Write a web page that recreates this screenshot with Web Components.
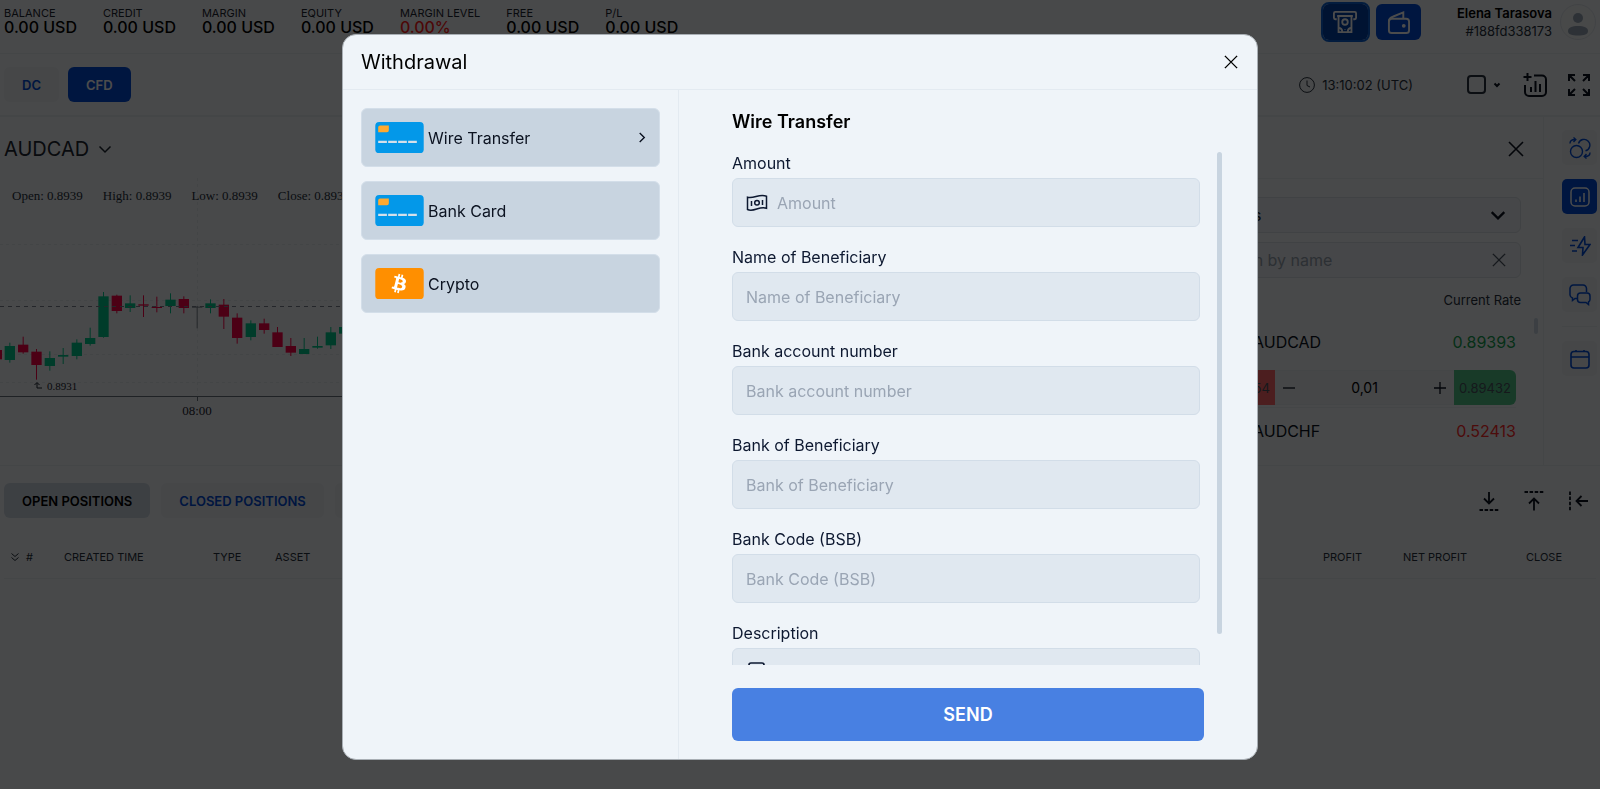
<!DOCTYPE html>
<html lang="en">
<head>
<meta charset="utf-8">
<title>Withdrawal</title>
<style>
    html, body {
        height: 100%;
    }

    body {
        margin: 0;
        overflow: hidden;
        background: #f2f5f8;
        color: #0b1220;
        font-family: Inter, "Liberation Sans", sans-serif;
        font-size: 16px;
        --blue: #004cd8;
        --line: #e4e9ee;
        --soft: #e9edf1;
    }
</style>
</head>
<body>
<trading-page></trading-page>
<withdraw-dialog></withdraw-dialog>

<script>
// stroke icons: view box, shape, stroke width
const icons = {
    atm: ["0 0 28 26", `<path d="M5 10H3.5A1.5 1.5 0 0 1 2 8.500V3.500A1.500 1.500 0 0 1 3.500 2h21A1.500 1.500 0 0 1 26 3.500v5a1.500 1.500 0 0 1-1.500 1.500H23M5.500 6.500h17M7 6.500V24h14V6.500"/><circle cx="14" cy="13" r="3"/><path d="M14 13v.1M7 19.500c2.500 0 4 1.800 4 4.500M21 19.500c-2.500 0-4 1.800-4 4.500M14 20.500v.5"/>`, 2],
    wallet: ["0 0 24 26", `<rect x="2" y="9" width="21" height="15" rx="3"/><path d="M2 12C2 9 3 8 6 7l11-4.500V9"/><circle cx="17.500" cy="16.500" r="1" fill="currentColor"/>`, 2],
    clock: ["0 0 16 16", `<circle cx="8" cy="8" r="7.400"/><path d="M8 3.500V8.500l3 1.500"/>`, 1],
    caret: ["0 0 8 8", `<path d="M1.500 2.500L4 5l2.500-2.500"/>`, 2],
    addChart: ["0 0 24 24", `<path d="M4.500 0v8M.5 4h8M11 2.500h8a4 4 0 0 1 4 4V19a4 4 0 0 1-4 4H6a4 4 0 0 1-4-4v-7M8 14v5M12.500 8v11M17 11v8"/>`, 2],
    expand: ["0 0 24 24", `<path d="M2 8V2h6M2 2l6 6M16 2h6v6M22 2l-6 6M22 16v6h-6M22 22l-6-6M8 22H2v-6M2 22l6-6"/>`, 2],
    chevron: ["0 0 14 14", `<path d="M1.500 4.500L7 10l5.500-5.500"/>`, 2],
    thinChevron: ["0 0 14 14", `<path d="M1.500 4.500L7 10l5.500-5.500"/>`, 1.5],
    right: ["0 0 8 12", `<path d="M1.500 1L6.500 6l-5 5"/>`, 1.5],
    close: ["0 0 16 16", `<path d="M1 1l14 14M15 1L1 15"/>`, 1.6],
    swap: ["0 0 22 22", `<circle cx="7.500" cy="14.500" r="6"/><path d="M9.500 6.500a5.800 5.800 0 1 1 7 7.300"/><path d="M1 6.500C1 3.500 3 2.500 6 2.500M4.500.500L6.800 2.500 4.500 5"/><path d="M21 15.500c0 3-2 4-5 4M17.500 17L15.200 19.500l2.300 2"/>`, 1.4],
    chartBox: ["0 0 20 20", `<rect x="1" y="1" width="18" height="18" rx="4"/><path d="M6 12.500V15M10 9.500V15M14 6v9"/>`, 1.5],
    bolt: ["0 0 22 20", `<path d="M15.500 1L9 11.500h5L13.500 19 21 8.500h-5zM3 4.500h6M1 9.500h5M3 15h5"/>`, 1.6],
    chat: ["0 0 22 22", `<path d="M8 14.500H6l-2.500 2V14A3.500 3.500 0 0 1 1 11V4.500A3.500 3.500 0 0 1 4.500 1H14a3.500 3.500 0 0 1 3.500 3.500V8"/><path d="M11.500 9h6.500a3 3 0 0 1 3 3v3.500a3 3 0 0 1-1.500 2.500v2.500L17 18.500h-5.500a3 3 0 0 1-3-3V12a3 3 0 0 1 3-3z"/>`, 1.5],
    calendar: ["0 0 20 20", `<rect x="1" y="2.500" width="18" height="16.500" rx="3"/><path d="M1 8h18M6 1v2M14 1v2"/>`, 1.6],
    dockDown: ["0 0 20 20", `<path d="M10 1v11M5 7.500l5 5 5-5"/><path d="M.5 19h19" stroke-dasharray="3.5 1.600"/>`, 1.8],
    dockUp: ["0 0 20 20", `<path d="M10 19.500V8M5 12.500l5-5 5 5"/><path d="M.5 1h19" stroke-dasharray="3.5 1.600"/>`, 1.8],
    dockLeft: ["0 0 20 20", `<path d="M19 10H8M12.500 5l-5 5 5 5"/><path d="M1 .5v19" stroke-dasharray="3.5 1.600"/>`, 1.8],
    sort: ["0 0 10 10", `<path d="M1.500 1.500L5 4.500l3.500-3M1.500 5.500L5 8.500l3.500-3"/>`, 1],
    minus: ["0 0 12 12", `<path d="M0 6h12"/>`, 1.3],
    plus: ["0 0 12 12", `<path d="M0 6h12M6 0v12"/>`, 1.3],
    banknote: ["0 0 22 18", `<path d="M1.500 3.200C8 5 13 -.5 20.500 2.200V14.200C13 11.700 8 18.500 1.500 15.500z"/><circle cx="11" cy="8.800" r="2.300"/><path d="M5.500 7v5M16.500 6v5"/>`, 1.5],
    note: ["0 0 22 22", `<rect x="3" y="1" width="15" height="20" rx="2"/><path d="M7 7h7M7 11h7"/>`, 1.7]
};

function icon(name, width, height = width) {
    const [box, shape, stroke] = icons[name];
    return `<svg width="${width}" height="${height}" viewBox="${box}" fill="none" stroke="currentColor" stroke-width="${stroke}" aria-hidden="true">${shape}</svg>`;
}

const resetStyle = `
    *, *::before, *::after { box-sizing: border-box; }
    button, input, select { font: inherit; color: inherit; margin: 0; }
    button { border: 0; padding: 0; background: none; cursor: pointer; display: flex; align-items: center; justify-content: center; }
    svg { display: block; flex: none; }
`;

class BaseElement extends HTMLElement {
    constructor() {
        super();
        this.attachShadow({ mode: "open" });
    }

    connectedCallback() {
        this.render();
    }

    render() {
        const template = document.createElement("template");
        template.innerHTML = `<style>${resetStyle}${this.getStyle()}</style>${this.getTemplate()}`;
        this.shadowRoot.replaceChildren(template.content.cloneNode(true));
    }
}

class StatItem extends BaseElement {
    getTemplate() {
        return `<span class="label">${this.getAttribute("label")}</span><strong><slot></slot></strong>`;
    }

    getStyle() {
        return `
            :host { display: flex; flex-direction: column; color: #000; }
            .label { font-size: 11px; line-height: 14px; color: #1c2530; }
            strong { font-size: 16px; line-height: 15px; font-weight: 500; }
            :host([negative]) strong { color: #ff1a1a; }
        `;
    }
}
customElements.define("stat-item", StatItem);

class TabButton extends BaseElement {
    getTemplate() {
        return `<button type="button"><slot></slot></button>`;
    }

    getStyle() {
        return `
            :host { display: block; }
            button {
                height: 35px;
                padding: 0 18px;
                border-radius: 6px;
                background: var(--soft);
                color: var(--blue);
                font-size: 13px;
                font-weight: 600;
                white-space: nowrap;
            }
            :host([primary]) button { background: var(--blue); color: #fff; }
            :host([selected]) button { background: #ccd6e2; color: #000; }
        `;
    }
}
customElements.define("tab-button", TabButton);

class AppHeader extends BaseElement {
    getTemplate() {
        return `
            <div class="stats">
                <stat-item label="BALANCE">0.00 USD</stat-item>
                <stat-item label="CREDIT">0.00 USD</stat-item>
                <stat-item label="MARGIN">0.00 USD</stat-item>
                <stat-item label="EQUITY">0.00 USD</stat-item>
                <stat-item label="MARGIN LEVEL" negative>0.00%</stat-item>
                <stat-item label="FREE">0.00 USD</stat-item>
                <stat-item label="P/L">0.00 USD</stat-item>
            </div>
            <div class="account">
                <button type="button" class="active" aria-label="Withdraw">${icon("atm", 26, 24)}</button>
                <button type="button" aria-label="Deposit">${icon("wallet", 23, 25)}</button>
                <div class="user">
                    <strong>Elena Tarasova</strong>
                    <span>#188fd338173</span>
                </div>
                <svg class="avatar" width="36" height="36" viewBox="0 0 36 36">
                    <circle cx="18" cy="18" r="17.500" fill="#f0f3f6" stroke="#dbe1e7"/>
                    <circle cx="18" cy="14" r="5" fill="#98a5b4"/>
                    <path d="M8 27c0-3.500 4-5 10-5s10 1.500 10 5-4 4.500-10 4.500S8 30.500 8 27z" fill="#98a5b4"/>
                </svg>
            </div>
        `;
    }

    getStyle() {
        return `
            :host { display: flex; justify-content: space-between; height: 54px; padding: 4px 4px 0; border-bottom: 1px solid var(--line); box-sizing: border-box; }
            .stats { display: flex; gap: 26px; padding-top: 2px; }
            .account { display: flex; align-items: flex-start; gap: 8px; }
            .account button { width: 45px; height: 36px; border-radius: 6px; background: var(--blue); color: #fff; }
            .account .active { background: #0040a8; outline: 2px solid #0a60d0; }
            .user { display: flex; flex-direction: column; align-items: flex-end; margin-left: 28px; line-height: 18px; font-size: 13px; }
            .user strong { font-weight: 600; color: #000; }
            .user span { color: #26303c; }
        `;
    }
}
customElements.define("app-header", AppHeader);

class ToolBar extends BaseElement {
    getTemplate() {
        return `
            <div class="group">
                <tab-button>DC</tab-button>
                <tab-button primary>CFD</tab-button>
            </div>
            <div class="tools">
                <span class="time">${icon("clock", 16)}13:10:02 (UTC)</span>
                <button type="button" class="layout" aria-label="Layout"><i></i>${icon("caret", 8)}</button>
                <button type="button" class="indicator" aria-label="Add indicator">${icon("addChart", 24)}</button>
                <button type="button" aria-label="Full screen">${icon("expand", 24)}</button>
            </div>
        `;
    }

    getStyle() {
        return `
            :host { display: flex; justify-content: space-between; align-items: center; height: 63px; padding: 0 9px 0 4px; border-bottom: 2px solid var(--line); box-sizing: border-box; }
            .group { display: flex; gap: 9px; }
            .tools { display: flex; align-items: center; gap: 20px; }
            .time { display: flex; align-items: center; gap: 7px; font-size: 13px; color: #26303c; margin-right: 34px; }
            .layout { gap: 7px; }
            .layout i { width: 19px; height: 19px; border: 2px solid #26303c; border-radius: 4px; }
            .indicator { margin-left: 2px; }
        `;
    }
}
customElements.define("tool-bar", ToolBar);

// x, high, body top, body bottom, low, direction: three units to a pixel
const candles = [
    [-10, 350, 360, 388, 392, "down"], [29, 338, 348, 390, 398, "up"], [69, 320, 344, 367, 371, "down"],
    [109, 357, 365, 405, 449, "down"], [149, 364, 384, 408, 422, "up"], [189, 354, 375, 380, 402, "up"],
    [230, 328, 338, 378, 388, "up"], [270, 293, 324, 342, 347, "up"], [310, 186, 199, 321, 323, "up"],
    [350, 194, 197, 243, 250, "down"], [390, 196, 220, 234, 246, "up"], [430, 196, 223, 227, 261, "down"],
    [470, 200, 231, 234, 247, "down"], [511, 190, 209, 228, 250, "up"], [551, 199, 207, 234, 250, "down"],
    [591, 228, 230, 233, 295, "flat"], [631, 208, 220, 234, 250, "up"], [671, 207, 224, 260, 297, "down"],
    [711, 250, 263, 324, 341, "down"], [752, 271, 280, 321, 331, "up"], [792, 266, 280, 300, 311, "down"],
    [832, 291, 307, 351, 351, "down"], [872, 324, 348, 368, 378, "down"], [912, 324, 357, 372, 372, "up"],
    [952, 320, 348, 353, 356, "up"], [992, 291, 307, 346, 357, "up"], [1032, 280, 291, 311, 330, "up"]
];

class ChartPanel extends BaseElement {
    getTemplate() {
        const bars = candles.map(([x, high, top, bottom, low, dir]) => `
            <g class="${dir}">
                <rect x="${x - 1}" y="${high}" width="3" height="${low - high}"/>
                <rect x="${x - 15}" y="${top}" width="31" height="${bottom - top}"/>
            </g>`).join("");

        return `
            <button type="button" class="pair">AUDCAD ${icon("thinChevron", 14)}</button>
            <div class="plot">
                <svg width="100%" height="287">
                    <g stroke="#e2e7ec" stroke-dasharray="3 3">
                        <path d="M197.500 0V217M0 66.500H1200M0 122.500H1200M0 176.500H1200M0 204.500H1200"/>
                    </g>
                    <g transform="translate(0 52) scale(.33333)">${bars}</g>
                    <path d="M0 128.500H1200" stroke="#78818c" stroke-dasharray="4 4"/>
                    <path d="M0 218.500H1200M197.500 218V223" stroke="#6a727c"/>
                    <path d="M42 210h-5v-5M34.500 207l2.500-2.500 2.500 2.500" fill="none" stroke="#1c2530"/>
                    <text x="47" y="212" class="serif">0.8931</text>
                    <text x="197" y="237" class="axis">08:00</text>
                </svg>
                <div class="legend"><span>Open: 0.8939</span><span>High: 0.8939</span><span>Low: 0.8939</span><span>Close: 0.8939</span></div>
            </div>
        `;
    }

    getStyle() {
        return `
            :host { display: block; min-width: 0; }
            .pair { height: 61px; padding: 3px 4px 0; gap: 9px; font-size: 20px; color: #1c2530; }
            .plot { position: relative; }
            .up { fill: #00c88c; }
            .down { fill: #ff0048; }
            .flat { fill: #78818c; }
            .serif { font: 11px "Liberation Serif", serif; fill: #1c2530; }
            .axis { font: 13px "Liberation Serif", serif; fill: #1c2530; text-anchor: middle; }
            .legend { position: absolute; top: 8px; left: 12px; display: flex; gap: 20px; font: 13px/20px "Liberation Serif", serif; color: #26303c; white-space: nowrap; }
        `;
    }
}
customElements.define("chart-panel", ChartPanel);

class RateRow extends BaseElement {
    getTemplate() {
        return `<span>${this.getAttribute("pair")}</span><span class="rate">${this.getAttribute("rate")}</span>`;
    }

    getStyle() {
        return `
            :host { display: flex; align-items: center; justify-content: space-between; height: 47px; padding-left: 40px; color: #0b1220; }
            :host([up]) .rate { color: #14a050; }
            :host([down]) .rate { color: #ff2a2a; }
        `;
    }
}
customElements.define("rate-row", RateRow);

class MarketPanel extends BaseElement {
    getTemplate() {
        return `
            <header><button type="button" aria-label="Close">${icon("close", 16)}</button></header>
            <div class="filters">
                <label class="box">
                    <select aria-label="Group"><option>Majors</option></select>
                    ${icon("chevron", 16)}
                </label>
                <label class="box">
                    <input type="text" placeholder="Search by name" aria-label="Search by name">
                    ${icon("close", 14)}
                </label>
                <p>Current Rate</p>
            </div>
            <div class="list">
                <div class="rows">
                    <rate-row pair="AUDCAD" rate="0.89393" up></rate-row>
                    <div class="trade">
                        <button type="button" class="sell">0.89354</button>
                        <div class="lot">
                            <button type="button" aria-label="Less">${icon("minus", 12)}</button>
                            <input type="text" value="0,01" aria-label="Volume">
                            <button type="button" aria-label="More">${icon("plus", 12)}</button>
                        </div>
                        <button type="button" class="buy">0.89432</button>
                    </div>
                    <rate-row pair="AUDCHF" rate="0.52413" down></rate-row>
                </div>
                <div class="thumb"></div>
            </div>
        `;
    }

    getStyle() {
        return `
            :host { display: block; overflow: hidden; }
            header { display: flex; justify-content: flex-end; height: 62px; padding: 2px 19px 0; border-bottom: 1px solid var(--line); }
            .filters { display: flex; flex-direction: column; gap: 9px; padding: 18px 22px 0 23px; }
            .box { display: flex; align-items: center; height: 36px; padding: 0 14px 0 9px; border: 1px solid #d6dce3; border-radius: 6px; background: #eceff3; }
            select, input { flex: 1; min-width: 0; border: 0; padding: 0; outline: 0; background: none; appearance: none; }
            .box + .box { color: #4a5562; }
            ::placeholder { color: #94a0ad; opacity: 1; }
            p { margin: 3px 0 0; text-align: right; font-size: 13px; line-height: 20px; color: #26303c; }
            .list { display: flex; align-items: flex-start; gap: 18px; padding: 8px 5px 0 36px; }
            .rows { flex: 1; min-width: 0; }
            .trade { display: flex; height: 35px; margin: 5px 0 2px; font-size: 14px; }
            .sell, .buy { width: 62px; font-size: 13px; color: #4a545f; }
            .sell { background: #ff6468; border-radius: 6px 0 0 6px; }
            .buy { background: #50c488; border-radius: 0 6px 6px 0; }
            .lot { flex: 1; display: flex; padding: 0 8px; min-width: 0; border: solid var(--line); border-width: 1px 0; background: #e9edf1; }
            .lot input { text-align: center; color: #000; }
            .rows rate-row:last-child { border-top: 1px solid var(--line); }
            .thumb { width: 4px; height: 16px; border-radius: 2px; background: #c8d4e0; }
        `;
    }
}
customElements.define("market-panel", MarketPanel);

class ToolRail extends BaseElement {
    getTemplate() {
        return `
            <button type="button" aria-label="Assets">${icon("swap", 22)}</button>
            <button type="button" class="active" aria-label="Market">${icon("chartBox", 20)}</button>
            <button type="button" aria-label="Quick trade">${icon("bolt", 22, 20)}</button>
            <button type="button" aria-label="Chat">${icon("chat", 22)}</button>
            <hr>
            <button type="button" aria-label="Calendar">${icon("calendar", 20)}</button>
        `;
    }

    getStyle() {
        return `
            :host { display: flex; flex-direction: column; gap: 14px; padding: 13px 3px 0 18px; border-left: 1px solid var(--line); }
            button { width: 35px; height: 35px; border-radius: 5px; background: var(--soft); color: var(--blue); }
            .active { background: var(--blue); color: #fff; }
            hr { width: 100%; height: 1px; margin: 0; border: 0; background: var(--line); }
        `;
    }
}
customElements.define("tool-rail", ToolRail);

class PositionsPanel extends BaseElement {
    getTemplate() {
        return `
            <div class="bar">
                <div class="tabs">
                    <tab-button selected>OPEN POSITIONS</tab-button>
                    <tab-button>CLOSED POSITIONS</tab-button>
                    <tab-button>ORDERS</tab-button>
                </div>
                <div class="docks">
                    <button type="button" aria-label="Dock bottom">${icon("dockDown", 20)}</button>
                    <button type="button" aria-label="Dock top">${icon("dockUp", 20)}</button>
                    <button type="button" aria-label="Dock left">${icon("dockLeft", 20)}</button>
                </div>
            </div>
            <table>
                <colgroup><col width="60"><col width="149"><col width="62"><col><col width="80"><col width="123"><col width="70"></colgroup>
                <thead>
                    <tr>
                        <th><span class="sort">${icon("sort", 10)}#</span></th>
                        <th>CREATED TIME</th>
                        <th>TYPE</th>
                        <th>ASSET</th>
                        <th>PROFIT</th>
                        <th>NET PROFIT</th>
                        <th>CLOSE</th>
                    </tr>
                </thead>
            </table>
        `;
    }

    getStyle() {
        return `
            :host { display: block; padding: 17px 4px 0; border-top: 1px solid var(--line); }
            .bar, .tabs, .docks { display: flex; align-items: center; }
            .bar { justify-content: space-between; margin-bottom: 19px; }
            .tabs { gap: 11px; }
            .docks { gap: 25px; padding-right: 7px; }
            table { width: 100%; table-layout: fixed; border-collapse: collapse; }
            th { height: 41px; padding: 0; border-bottom: 1px solid var(--line); text-align: left; font-size: 11px; font-weight: 400; color: #26303c; }
            .sort { display: flex; align-items: center; gap: 6px; padding-left: 6px; }
        `;
    }
}
customElements.define("positions-panel", PositionsPanel);

class TradingPage extends BaseElement {
    getTemplate() {
        return `
            <app-header></app-header>
            <tool-bar></tool-bar>
            <main>
                <chart-panel></chart-panel>
                <market-panel></market-panel>
                <tool-rail></tool-rail>
            </main>
            <positions-panel></positions-panel>
        `;
    }

    getStyle() {
        return `
            :host { display: block; }
            main { display: grid; grid-template-columns: minmax(0, 1fr) 366px auto; }
        `;
    }
}
customElements.define("trading-page", TradingPage);

class MethodCard extends BaseElement {
    getTemplate() {
        const art = this.hasAttribute("crypto")
            ? `<svg width="49" height="31" viewBox="0 0 50 32"><rect width="50" height="32" rx="4" fill="#ff8f00"/><path transform="translate(8.500 0)" fill="#fff" d="M23.189 14.020c.314-2.096-1.283-3.223-3.465-3.975l.708-2.840-1.728-.430-.690 2.765c-.454-.114-.920-.220-1.385-.326l.695-2.783L15.596 6l-.708 2.839c-.376-.086-.746-.170-1.104-.260l.002-.009-2.384-.595-.460 1.846s1.283.294 1.256.312c.700.175.826.638.805 1.006l-.806 3.235c.048.012.110.030.180.057l-.183-.045-1.130 4.532c-.086.212-.303.531-.793.410.018.025-1.256-.313-1.256-.313l-.858 1.978 2.250.561c.418.105.828.215 1.231.318l-.715 2.872 1.727.430.708-2.840c.472.127.930.245 1.378.357l-.706 2.828 1.728.430.715-2.866c2.948.558 5.164.333 6.097-2.333.752-2.146-.037-3.385-1.588-4.192 1.130-.260 1.980-1.003 2.207-2.538zm-3.950 5.538c-.533 2.147-4.148.986-5.320.695l.950-3.805c1.172.293 4.929.872 4.370 3.110zm.535-5.569c-.487 1.953-3.495.960-4.470.717l.860-3.450c.975.243 4.118.696 3.610 2.733z"/></svg>`
            : `<svg width="49" height="31" viewBox="0 0 50 32"><rect width="50" height="32" rx="4" fill="#0398e9"/><path d="M5 3.500h9v5a2 2 0 0 1-2 2H3v-5a2 2 0 0 1 2-2z" fill="#ffa92f"/><path d="M3 20.500h40" stroke="#d5e0ea" stroke-width="2.500" stroke-dasharray="9 1.300"/></svg>`;

        return `
            <button type="button">
                ${art}
                <span><slot></slot></span>
                ${this.hasAttribute("selected") ? icon("right", 8, 11) : ""}
            </button>
        `;
    }

    getStyle() {
        return `
            :host { display: block; }
            button { width: 100%; height: 59px; gap: 4px; padding: 0 13px; border: 1px solid #d3dee9; border-radius: 6px; background: #c8d4e0; }
            span { flex: 1; text-align: left; }
        `;
    }
}
customElements.define("method-card", MethodCard);

class FormField extends BaseElement {
    getTemplate() {
        const label = this.getAttribute("label");
        const name = this.getAttribute("icon");
        return `
            <label for="field">${label}</label>
            <div class="box">
                ${name ? icon(name, 22, name === "note" ? 22 : 18) : ""}
                <input id="field" type="text" placeholder="${label}">
            </div>
        `;
    }

    getStyle() {
        return `
            :host { display: flex; flex-direction: column; gap: 5px; color: #0d1830; }
            label { line-height: 20px; }
            .box { display: flex; align-items: center; gap: 9px; height: 49px; padding: 0 13px; border: 1px solid #d2dde8; border-radius: 6px; background: #e0e8f0; }
            input { flex: 1; min-width: 0; border: 0; padding: 0; outline: 0; background: none; }
            ::placeholder { color: #9aa5b4; opacity: 1; }
        `;
    }
}
customElements.define("form-field", FormField);

class WithdrawDialog extends BaseElement {
    getTemplate() {
        return `
            <section role="dialog" aria-labelledby="title">
                <header>
                    <h2 id="title">Withdrawal</h2>
                    <button type="button" aria-label="Close">${icon("close", 14)}</button>
                </header>
                <div class="body">
                    <nav>
                        <method-card selected>Wire Transfer</method-card>
                        <method-card>Bank Card</method-card>
                        <method-card crypto>Crypto</method-card>
                    </nav>
                    <form>
                        <h3>Wire Transfer</h3>
                        <div class="scroll">
                            <div class="fields">
                                <form-field label="Amount" icon="banknote"></form-field>
                                <form-field label="Name of Beneficiary"></form-field>
                                <form-field label="Bank account number"></form-field>
                                <form-field label="Bank of Beneficiary"></form-field>
                                <form-field label="Bank Code (BSB)"></form-field>
                                <form-field label="Description" icon="note"></form-field>
                            </div>
                            <div class="thumb"></div>
                        </div>
                        <button type="button" class="send">SEND</button>
                    </form>
                </div>
            </section>
        `;
    }

    getStyle() {
        return `
            :host { position: fixed; inset: 0; display: flex; align-items: center; justify-content: center; padding-top: 5px; box-sizing: border-box; background: rgba(0, 0, 0, .7); }
            section { display: flex; flex-direction: column; width: min(916px, 94vw); height: 92vh; border: 1px solid #a9afb5; border-radius: 14px; background: #eff4f9; overflow: hidden; }
            header { display: flex; align-items: center; justify-content: space-between; height: 55px; padding: 0 19px 0 18px; border-bottom: 1px solid #e3eaf1; color: #000; }
            h2, h3 { margin: 0; }
            h2 { font-size: 20px; font-weight: 400; }
            .body { flex: 1; min-height: 0; display: grid; grid-template-columns: 336px minmax(0, 1fr); }
            nav { display: flex; flex-direction: column; gap: 14px; padding: 18px; border-right: 1px solid #e3eaf1; }
            form { display: flex; flex-direction: column; min-height: 0; padding: 20px 35px 18px 53px; }
            h3 { font-size: 18px; line-height: 24px; font-weight: 600; color: #000; margin-bottom: 18px; }
            .scroll { flex: 1; min-height: 0; display: flex; gap: 17px; overflow: hidden; }
            .fields { flex: 1; min-width: 0; display: flex; flex-direction: column; gap: 20px; padding-top: 1px; }
            .thumb { width: 5px; height: 94%; border-radius: 3px; background: #c8d4e0; }
            .send { height: 53px; margin: 23px 18px 0 0; border-radius: 6px; background: #4880e2; color: #fff; font-size: 18px; font-weight: 600; }
        `;
    }
}
customElements.define("withdraw-dialog", WithdrawDialog);
</script>
</body>
</html>
